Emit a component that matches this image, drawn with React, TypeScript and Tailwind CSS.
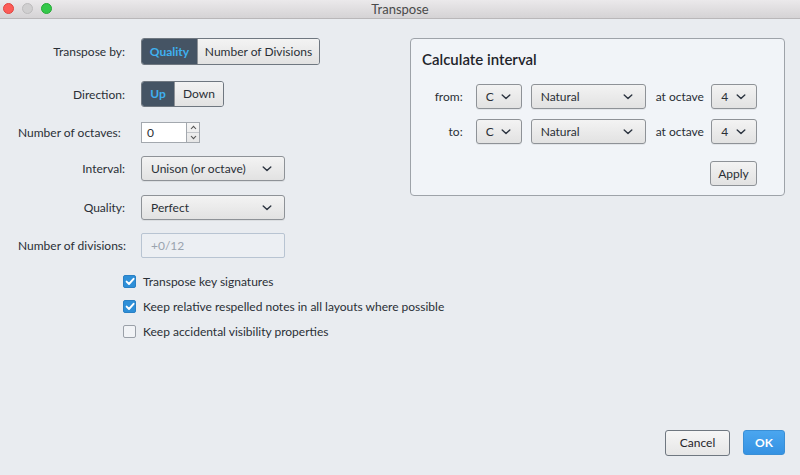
import React from "react";

const F = { fontFamily: "Lato, 'Open Sans', sans-serif" };

function Chevron() {
  return (
    <svg width="10" height="6" viewBox="0 0 10 6" className="shrink-0">
      <path d="M1.2 1 L5 4.6 L8.8 1" fill="none" stroke="#2c3440" strokeWidth="1.4" strokeLinecap="round" strokeLinejoin="round" />
    </svg>
  );
}

function Dropdown({ text, w, pr = "pr-[12px]" }: { text: string; w: string; pr?: string }) {
  return (
    <div className={`${w} h-[25px] flex items-center justify-between pl-[9px] ${pr} rounded-[3px] border border-[#8e9297] bg-gradient-to-b from-[#f3f3f3] to-[#e2e2e2] text-[12px] text-[#2a2f36] shadow-[0_1px_0_rgba(0,0,0,0.06)]`}>
      <span className="pt-[1px]">{text}</span>
      <Chevron />
    </div>
  );
}

function Check({ on }: { on: boolean }) {
  return on ? (
    <div className="w-[13px] h-[13px] shrink-0 rounded-[2px] bg-[#2e8fd8] border border-[#2a80c4] flex items-center justify-center">
      <svg width="10" height="9" viewBox="0 0 10 9">
        <path d="M1.6 4.6 L4 7 L8.6 1.8" fill="none" stroke="#fff" strokeWidth="1.9" strokeLinecap="round" strokeLinejoin="round" />
      </svg>
    </div>
  ) : (
    <div className="w-[13px] h-[13px] shrink-0 rounded-[2px] bg-[#f1f3f6] border border-[#9aa0a8]" />
  );
}

export default function App() {
  return (
    <div style={F} className="w-[800px] h-[475px] bg-[#e9ecf0] flex flex-col overflow-hidden text-[12px] text-[#2a2f36] whitespace-nowrap">
      {/* title bar */}
      <div className="h-[19px] shrink-0 relative flex items-center justify-center bg-gradient-to-b from-[#ebe9eb] to-[#d5d3d5] border-b border-[#b9b7b9]">
        <div className="absolute left-[3px] top-[3px] flex gap-[8px]">
          <div className="w-[11px] h-[11px] rounded-full bg-[#fc5b57] border border-[#e0443f]" />
          <div className="w-[11px] h-[11px] rounded-full bg-[#d0cfd0] border border-[#bdbcbd]" />
          <div className="w-[11px] h-[11px] rounded-full bg-[#34c84a] border border-[#25a936]" />
        </div>
        <span className="text-[13px] text-[#4a4a4a] leading-none">Transpose</span>
      </div>

      {/* body */}
      <div className="flex-1 flex flex-col pl-[18px] pr-[15px] pt-[19px] pb-[19px]">
        <div className="flex justify-between">
          {/* left column */}
          <div className="w-[392px] shrink-0 flex flex-col">
            <div className="flex items-center h-[27px]">
              <div className="w-[107px] text-right pt-[1px]">Transpose by:</div>
              <div className="ml-[16px] flex h-[27px] rounded-[3px] border border-[#6f7780] overflow-hidden">
                <div className="w-[55px] flex items-center justify-center bg-[#455464] text-[#3fb0f0] font-bold">Quality</div>
                <div className="w-[122px] flex items-center justify-center bg-gradient-to-b from-[#f3f3f3] to-[#e2e2e2] border-l border-[#8e9297]">Number of Divisions</div>
              </div>
            </div>

            <div className="flex items-center h-[26px] mt-[16px]">
              <div className="w-[107px] text-right pt-[1px]">Direction:</div>
              <div className="ml-[16px] flex h-[26px] rounded-[3px] border border-[#6f7780] overflow-hidden">
                <div className="w-[32px] flex items-center justify-center bg-[#455464] text-[#3fb0f0] font-bold">Up</div>
                <div className="w-[49px] flex items-center justify-center bg-gradient-to-b from-[#f3f3f3] to-[#e2e2e2] border-l border-[#8e9297]">Down</div>
              </div>
            </div>

            <div className="flex items-center h-[21px] mt-[15px]">
              <div className="w-[107px] pt-[1px]">Number of octaves:</div>
              <div className="ml-[16px] flex h-[21px]">
                <div className="w-[46px] bg-white border border-[#a3a8ae] flex items-center pl-[5px]">0</div>
                <div className="w-[13px] border border-l-0 border-[#a3a8ae] bg-gradient-to-b from-[#f6f6f6] to-[#e6e6e6] flex flex-col">
                  <div className="flex-1 flex items-center justify-center border-b border-[#c3c6ca]">
                    <svg width="7" height="5" viewBox="0 0 7 5"><path d="M1 4 L3.5 1.3 L6 4" fill="none" stroke="#555" strokeWidth="1.1" /></svg>
                  </div>
                  <div className="flex-1 flex items-center justify-center">
                    <svg width="7" height="5" viewBox="0 0 7 5"><path d="M1 1 L3.5 3.7 L6 1" fill="none" stroke="#555" strokeWidth="1.1" /></svg>
                  </div>
                </div>
              </div>
            </div>

            <div className="flex items-center h-[25px] mt-[13px]">
              <div className="w-[107px] text-right pt-[1px]">Interval:</div>
              <div className="ml-[16px]"><Dropdown text="Unison (or octave)" w="w-[144px]" /></div>
            </div>

            <div className="flex items-center h-[25px] mt-[14px]">
              <div className="w-[107px] text-right pt-[1px]">Quality:</div>
              <div className="ml-[16px]"><Dropdown text="Perfect" w="w-[144px]" /></div>
            </div>

            <div className="flex items-center h-[25px] mt-[13px]">
              <div className="w-[107px] pt-[1px]">Number of divisions:</div>
              <div className="ml-[16px] w-[144px] h-[25px] border border-[#b8c4d2] rounded-[2px] bg-[#eceff3] flex items-center pl-[9px] text-[#9aa3ae]">+0/12</div>
            </div>

            <div className="flex flex-col pl-[105px] mt-[16px] gap-[11px]">
              <div className="flex items-center h-[14px] gap-[7px]"><Check on /><span className="pt-[1px]">Transpose key signatures</span></div>
              <div className="flex items-center h-[14px] gap-[7px]"><Check on /><span className="pt-[1px]">Keep relative respelled notes in all layouts where possible</span></div>
              <div className="flex items-center h-[14px] gap-[7px]"><Check on={false} /><span className="pt-[1px]">Keep accidental visibility properties</span></div>
            </div>
          </div>

          {/* right panel */}
          <div className="w-[375px] h-[158px] shrink-0 rounded-[4px] border border-[#9ea3a9] bg-[#f1f4f8] flex flex-col pl-[11px] pr-[27px] pt-[10px]">
            <div className="text-[15px] font-semibold text-[#1f242b] leading-[20px]">Calculate interval</div>
            <div className="flex items-center h-[25px] mt-[15px]">
              <div className="w-[41px] text-right">from:</div>
              <div className="ml-[13px]"><Dropdown text="C" w="w-[46px]" pr="pr-[10px]" /></div>
              <div className="ml-[9px]"><Dropdown text="Natural" w="w-[115px]" /></div>
              <div className="ml-[10px] w-[56px]">at octave</div>
              <Dropdown text="4" w="w-[46px]" pr="pr-[10px]" />
            </div>
            <div className="flex items-center h-[25px] mt-[10px]">
              <div className="w-[41px] text-right">to:</div>
              <div className="ml-[13px]"><Dropdown text="C" w="w-[46px]" pr="pr-[10px]" /></div>
              <div className="ml-[9px]"><Dropdown text="Natural" w="w-[115px]" /></div>
              <div className="ml-[10px] w-[56px]">at octave</div>
              <Dropdown text="4" w="w-[46px]" pr="pr-[10px]" />
            </div>
            <div className="flex justify-end mt-[17px]">
              <div className="w-[47px] h-[25px] rounded-[3px] border border-[#8e9297] bg-gradient-to-b from-[#f3f3f3] to-[#e2e2e2] flex items-center justify-center">Apply</div>
            </div>
          </div>
        </div>

        <div className="flex-1" />

        <div className="flex justify-end gap-[13px]">
          <div className="w-[65px] h-[26px] rounded-[3px] border border-[#6f7780] bg-gradient-to-b from-[#f6f6f6] to-[#e6e6e6] flex items-center justify-center text-[#1f242b]">Cancel</div>
          <div className="w-[42px] h-[25px] rounded-[3px] bg-gradient-to-b from-[#4aa6ef] to-[#3592e3] border border-[#3a8fd6] flex items-center justify-center text-white font-bold">OK</div>
        </div>
      </div>
    </div>
  );
}
